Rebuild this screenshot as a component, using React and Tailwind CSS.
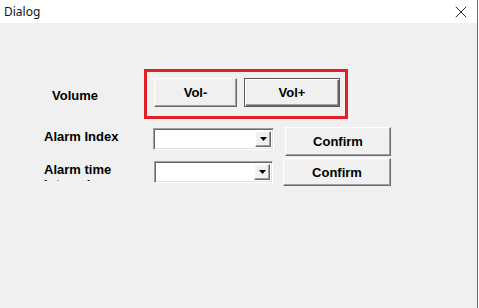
import { X } from 'lucide-react'

const raised =
  'border border-t-white border-l-white border-r-[#696969] border-b-[#696969] shadow-[inset_-1px_-1px_#a0a0a0,inset_1px_1px_#f4f4f4]'

export default function App() {
  return (
    <div className="h-[308px] w-[479px] overflow-hidden bg-white font-['Liberation_Sans',Arial,sans-serif] text-black">
      <div className="flex h-[308px] w-[478px] flex-col border-r border-[#6e6e6e]">
        <TitleBar />
        <div className="flex flex-1 flex-col bg-[#f0f0f0]">
          <div className="mt-[46px] flex h-[49px] items-center">
            <span className="ml-[52px] w-[92px] pt-[3px] text-[13px] font-bold leading-[15px]">
              Volume
            </span>
            <div className="flex h-[50px] w-[204px] items-start gap-[7px] border-[3px] border-[#e01f26] pl-[7px] pt-[6px]">
              <WinButton className="h-[29px] w-[83px]">Vol-</WinButton>
              <WinButton primary className="h-[29px] w-[96px]">
                Vol+
              </WinButton>
            </div>
          </div>

          <div className="mt-[7px] flex h-[31px] items-start">
            <span className="ml-[44px] mt-[4px] w-[109px] text-[13px] font-bold leading-[15px]">
              Alarm Index
            </span>
            <Combo className="mt-[3px] w-[121px]" />
            <WinButton className="ml-[11px] mt-[2px] h-[29px] w-[106px]">Confirm</WinButton>
          </div>

          <div className="flex h-[31px] items-start">
            <span className="ml-[44px] mt-[6px] h-[19px] w-[110px] overflow-hidden text-[13px] font-bold leading-[15px]">
              Alarm time interval
            </span>
            <Combo className="mt-[5px] w-[119px]" />
            <WinButton className="ml-[10px] mt-[2px] h-[28px] w-[108px]">Confirm</WinButton>
          </div>
        </div>
      </div>
    </div>
  )
}

function TitleBar() {
  return (
    <div className="flex h-[23px] items-center bg-white pl-[4px] pr-[6px]">
      <span className="font-['Noto_Sans',sans-serif] text-[12px] leading-none text-[#111]">Dialog</span>
      <X className="ml-auto h-[20px] w-[20px] text-black" strokeWidth={1} />
    </div>
  )
}

function WinButton({ primary, className, children }) {
  const style = primary
    ? 'border border-[#5a5a5a] shadow-[inset_1px_1px_#fff,inset_-1px_-1px_#696969,inset_-2px_-2px_#a0a0a0]'
    : raised
  return (
    <button
      type="button"
      className={`flex items-center justify-center bg-[#f0f0f0] text-[13px] font-bold leading-[15px] ${style} ${className}`}
    >
      {children}
    </button>
  )
}

function Combo({ className }) {
  return (
    <div
      className={`flex h-[22px] border border-t-[#a0a0a0] border-l-[#a0a0a0] border-r-white border-b-white bg-white shadow-[inset_1px_1px_#696969,inset_-1px_-1px_#e3e3e3] p-[2px] ${className}`}
    >
      <div className="flex-1" />
      <div className={`flex w-[16px] items-center justify-center bg-[#f0f0f0] ${raised}`}>
        <svg width="7" height="4" viewBox="0 0 7 4" aria-hidden="true">
          <polygon points="0,0 7,0 3.5,4" fill="#000" />
        </svg>
      </div>
    </div>
  )
}
